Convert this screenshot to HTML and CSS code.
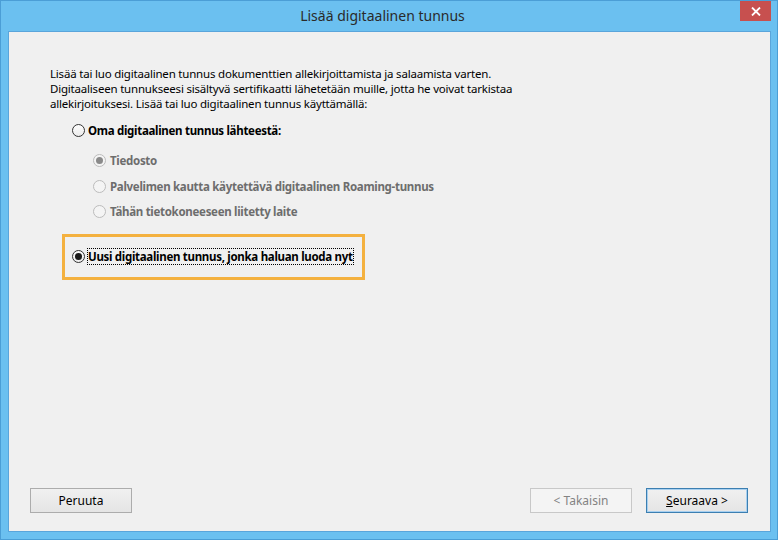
FILE: index.html
```html
<!DOCTYPE html>
<html lang="fi">
<head>
<meta charset="utf-8">
<title>Lisää digitaalinen tunnus</title>
<link rel="stylesheet" href="styles.css">
</head>
<body>
<div class="window">
  <div class="titlebar">
    <div class="title">Lisää digitaalinen tunnus</div>
    <div class="close"><svg width="10" height="9" viewBox="0 0 10 9"><path d="M1 0.5 L9 8.5 M9 0.5 L1 8.5" stroke="#fff" stroke-width="1.8"/></svg></div>
  </div>
  <div class="content">
    <p class="intro">Lisää tai luo digitaalinen tunnus dokumenttien allekirjoittamista ja salaamista varten.<br>Digitaaliseen tunnukseesi sisältyvä sertifikaatti lähetetään muille, jotta he voivat tarkistaa<br>allekirjoituksesi. Lisää tai luo digitaalinen tunnus käyttämällä:</p>
    <div class="option main"><span class="radio"></span><span class="label">Oma digitaalinen tunnus lähteestä:</span></div>
    <div class="suboptions">
      <div class="option sub"><span class="radio disabled checked"></span><span class="label">Tiedosto</span></div>
      <div class="option sub"><span class="radio disabled"></span><span class="label">Palvelimen kautta käytettävä digitaalinen Roaming-tunnus</span></div>
      <div class="option sub"><span class="radio disabled"></span><span class="label">Tähän tietokoneeseen liitetty laite</span></div>
    </div>
    <div class="highlight">
      <div class="option main"><span class="radio checked"></span><span class="label focus">Uusi digitaalinen tunnus, jonka haluan luoda nyt</span></div>
    </div>
    <div class="spacer"></div>
    <div class="buttons">
      <button class="btn">Peruuta</button>
      <div class="right">
        <button class="btn disabled">&lt; Takaisin</button>
        <button class="btn default"><u>S</u>euraava &gt;</button>
      </div>
    </div>
  </div>
</div>
</body>
</html>
```

FILE: styles.css
```css
* { box-sizing: border-box; }
html, body { margin: 0; padding: 0; }
body {
  width: 778px;
  height: 540px;
  overflow: hidden;
  font-family: "Noto Sans", "Open Sans", sans-serif;
  font-size: 11.5px;
  color: #000;
}
.window {
  width: 778px;
  height: 540px;
  background: #6bc0f0;
  border: 1px solid #4b9ed6;
  display: flex;
  flex-direction: column;
}
.titlebar {
  height: 30px;
  display: flex;
  align-items: flex-start;
  flex-shrink: 0;
}
.title {
  flex: 1;
  text-align: center;
  padding-left: 24px;
  padding-top: 5px;
  font-size: 14px;
  color: #2a2a2a;
  line-height: 20px;
}
.close {
  width: 31px;
  height: 20px;
  margin-right: 6px;
  background: #c7504f;
  display: flex;
  align-items: center;
  justify-content: center;
}
.content {
  flex: 1;
  margin: 0 6px 7px 7px;
  background: #f0f0f0;
  border: 1px solid #5aa5db;
  display: flex;
  flex-direction: column;
}
.intro {
  margin: 34px 0 0 41px;
  line-height: 15px;
  letter-spacing: -0.2px;
}
.option {
  display: flex;
  align-items: center;
  height: 15px;
  line-height: 15px;
}
.option .label {
  font-weight: bold;
  letter-spacing: -0.3px;
  white-space: nowrap;
}
.main { margin-left: 63px; }
.main .radio { margin-right: 3px; }
.content > .option.main { margin-top: 12px; }
.suboptions {
  margin-top: 15px;
  margin-left: 84px;
  display: flex;
  flex-direction: column;
  gap: 10.5px;
}
.sub .radio { margin-right: 4px; }
.sub .label { color: #6d6d6d; }
.radio {
  width: 13px;
  height: 13px;
  border-radius: 50%;
  border: 1px solid #333;
  background: linear-gradient(#fdfdfd, #ececec);
  display: flex;
  align-items: center;
  justify-content: center;
  flex-shrink: 0;
}
.radio.checked::after {
  content: "";
  width: 7px;
  height: 7px;
  border-radius: 50%;
  background: #1a1a1a;
}
.radio.disabled {
  border-color: #bcbcbc;
  background: #f4f4f4;
}
.radio.disabled.checked::after { background: #8a8a8a; }
.highlight {
  margin: 14.5px 0 0 53px;
  width: 303px;
  height: 46px;
  border: 3px solid #f4b13f;
  display: flex;
  align-items: center;
}
.highlight .main { margin-left: 7px; }
.focus {
  outline: 1px dotted #000;
  outline-offset: 0;
}
.spacer { flex: 1; }
.buttons {
  display: flex;
  justify-content: space-between;
  padding: 0 22px 18px 21px;
}
.right { display: flex; gap: 14px; }
.btn {
  width: 102px;
  height: 25px;
  font-family: inherit;
  font-size: 12px;
  color: #000;
  border: 1px solid #acacac;
  background: linear-gradient(#f0f0f0, #e5e5e5);
  padding: 0;
  border-radius: 0;
}
.btn.disabled {
  color: #838383;
  border-color: #c8c8c8;
  background: #f4f4f4;
}
.btn.default {
  border-color: #3c7fb1;
  background: linear-gradient(#f0f0f0, #e5e5e5);
  box-shadow: inset 0 0 0 1px #a8d0f0;
}
```
